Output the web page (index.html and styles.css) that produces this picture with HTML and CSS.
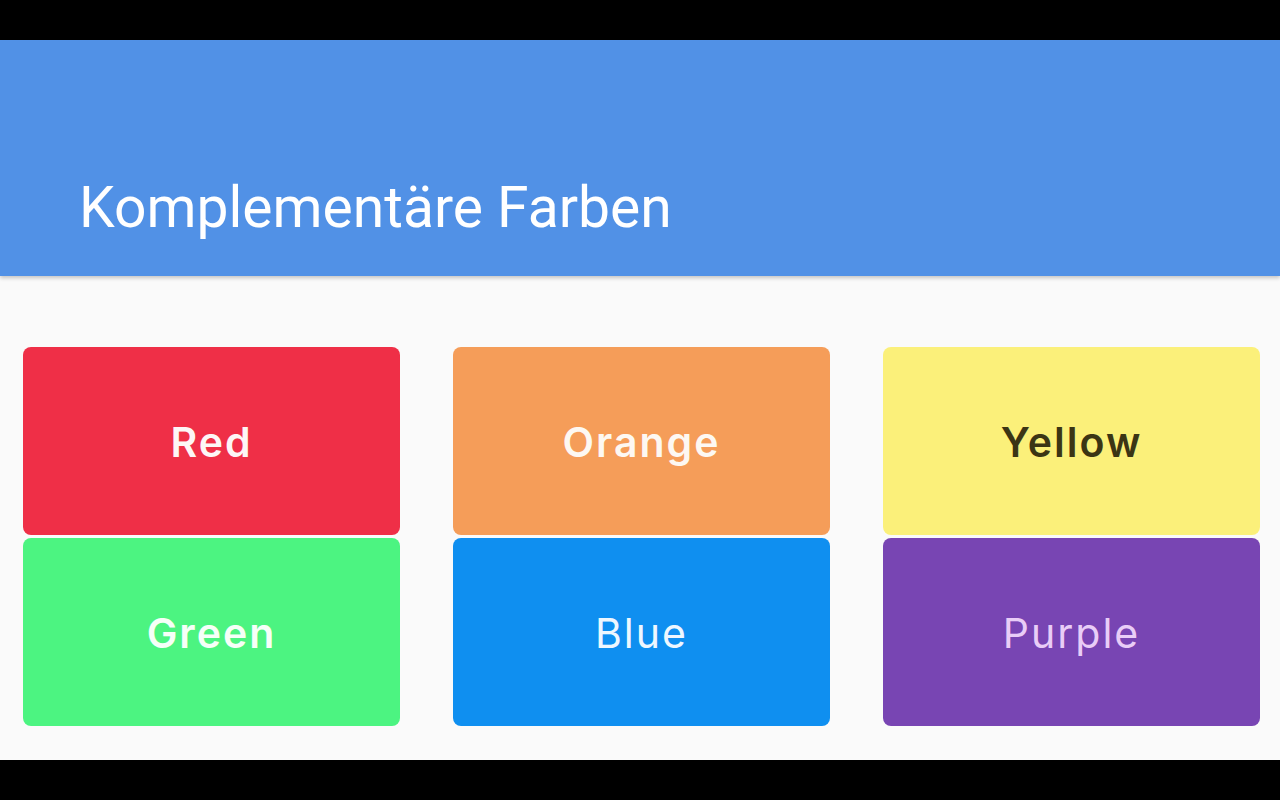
FILE: index.html
```html
<!DOCTYPE html>
<html lang="de">
<head>
<meta charset="utf-8">
<title>Komplementäre Farben</title>
<link rel="stylesheet" href="styles.css">
</head>
<body>
<div class="screen">
  <div class="statusbar"></div>
  <header class="appbar">
    <h1 class="title">Komplementäre Farben</h1>
  </header>
  <main class="content">
    <div class="grid">
      <div class="tile red"><span>Red</span></div>
      <div class="tile orange"><span>Orange</span></div>
      <div class="tile yellow"><span>Yellow</span></div>
      <div class="tile green"><span>Green</span></div>
      <div class="tile blue"><span>Blue</span></div>
      <div class="tile purple"><span>Purple</span></div>
    </div>
  </main>
  <div class="navbar"></div>
</div>
</body>
</html>
```

FILE: styles.css
```css
* { box-sizing: border-box; }
html, body { margin: 0; padding: 0; background: #000; }
.screen {
  width: 1280px;
  height: 800px;
  display: flex;
  flex-direction: column;
  overflow: hidden;
}
.statusbar { height: 40px; background: #000; flex: none; }
.appbar {
  height: 236px;
  flex: none;
  background: #5191e6;
  display: flex;
  align-items: flex-end;
  padding: 0 0 36px 79px;
  position: relative;
  z-index: 1;
  box-shadow: 0 2px 4px rgba(0,0,0,0.22);
}
.title {
  margin: 0;
  font-family: Roboto, "Liberation Sans", sans-serif;
  font-weight: 400;
  font-size: 57px;
  line-height: 64px;
  color: #ffffff;
  letter-spacing: 0;
}
.content {
  flex: 1;
  background: #fafafa;
  padding: 71px 20px 0 23px;
}
.grid {
  display: grid;
  grid-template-columns: repeat(3, 377px);
  grid-auto-rows: 188px;
  column-gap: 53px;
  row-gap: 3px;
}
.tile {
  border-radius: 8px;
  display: flex;
  align-items: center;
  justify-content: center;
  font-family: Inter, "Noto Sans", sans-serif;
  font-size: 41px;
  letter-spacing: 2px;
  padding-top: 2px;
}
.red { background: #ef2f47; color: #fdf6f6; font-weight: 600; }
.orange { background: #f59d59; color: #fdf8f2; font-weight: 600; }
.yellow { background: #fbf07a; color: #3b3514; font-weight: 600; }
.green { background: #4cf481; color: #f6fff8; font-weight: 600; }
.blue { background: #0f8ff0; color: #eef7ff; font-weight: 400; }
.purple { background: #7845b3; color: #e9cdf7; font-weight: 400; }
.navbar { height: 40px; background: #000; flex: none; }
```
